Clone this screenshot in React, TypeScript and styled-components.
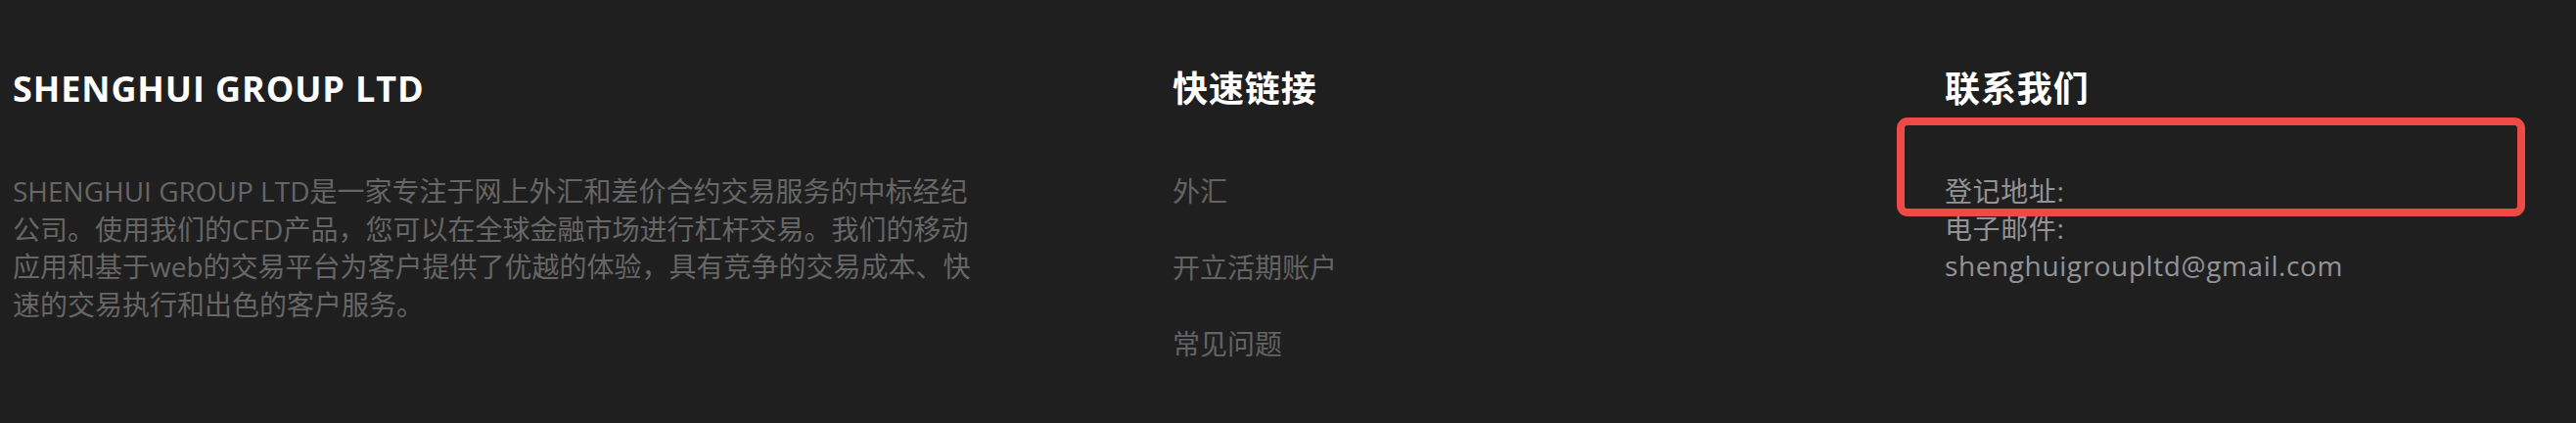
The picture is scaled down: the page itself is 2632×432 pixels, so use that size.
import React from "react";
import styled, { createGlobalStyle } from "styled-components";

const GlobalStyle = createGlobalStyle`
  html, body {
    margin: 0;
    padding: 0;
    background: #1f1f1f;
  }
  body {
    font-family: "Open Sans", "Noto Sans CJK SC", sans-serif;
  }
  * { box-sizing: border-box; }
`;

const Footer = styled.footer`
  display: grid;
  grid-template-columns: 1185px 789px 1fr;
  height: 432px;
  padding: 69px 0 0 13px;
  background: #1f1f1f;
`;

const Column = styled.div`
  position: relative;
  display: flex;
  flex-direction: column;
`;

const Title = styled.h3`
  margin: 0 0 63px;
  font-family: "Open Sans", "Noto Sans CJK SC", sans-serif;
  font-size: 36px;
  line-height: 44px;
  font-weight: 700;
  color: #ffffff;
  letter-spacing: 0.9px;
`;

const About = styled.p`
  margin: 0;
  max-width: 1002px;
  font-size: 28px;
  line-height: 38.5px;
  color: #666666;
`;

const LinkList = styled.ul`
  list-style: none;
  margin: 0;
  padding: 0;
  display: flex;
  flex-direction: column;
  gap: 39.5px;
`;

const LinkItem = styled.li`
  font-size: 28px;
  line-height: 38.5px;
  color: #636363;
`;

const ContactLine = styled.div`
  font-size: 28px;
  line-height: 38px;
  color: #939396;
  letter-spacing: 0.6px;
`;

const Highlight = styled.div`
  position: absolute;
  left: -49px;
  top: 51px;
  width: 642px;
  height: 101px;
  border: 8px solid #f04a46;
  border-radius: 11px;
  pointer-events: none;
`;

export default function App() {
  return (
    <>
      <GlobalStyle />
      <Footer>
        <Column>
          <Title>SHENGHUI GROUP LTD</Title>
          <About>
            SHENGHUI GROUP LTD是一家专注于网上外汇和差价合约交易服务的中标经纪公司。使用我们的CFD产品，您可以在全球金融市场进行杠杆交易。我们的移动应用和基于web的交易平台为客户提供了优越的体验，具有竞争的交易成本、快速的交易执行和出色的客户服务。
          </About>
        </Column>
        <Column>
          <Title>快速链接</Title>
          <LinkList>
            <LinkItem>外汇</LinkItem>
            <LinkItem>开立活期账户</LinkItem>
            <LinkItem>常见问题</LinkItem>
          </LinkList>
        </Column>
        <Column>
          <Title>联系我们</Title>
          <ContactLine>登记地址:</ContactLine>
          <ContactLine>电子邮件:</ContactLine>
          <ContactLine>shenghuigroupltd@gmail.com</ContactLine>
          <Highlight />
        </Column>
      </Footer>
    </>
  );
}
